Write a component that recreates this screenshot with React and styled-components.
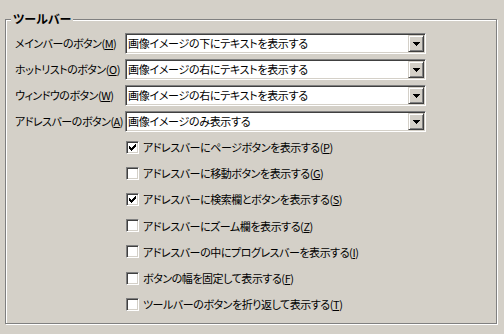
import React from "react";
import styled, { createGlobalStyle } from "styled-components";

const Global = createGlobalStyle`
  html, body { margin: 0; padding: 0; background: #d4d0c8; }
  body {
    width: 504px; height: 334px; overflow: hidden;
    font-family: "Noto Sans CJK JP", "Noto Sans", sans-serif;
    font-size: 11px; color: #000;
    font-feature-settings: "palt";
  }
`;

const Page = styled.div`
  padding: 19px 6px 0 5px;
`;

const Group = styled.div`
  position: relative;
  box-sizing: border-box;
  width: 492px;
  height: 305px;
  border: 1px solid #808080;
  box-shadow: 1px 1px 0 #fff, inset 1px 1px 0 #fff;
  padding: 13px 0 0 9px;
`;

const Legend = styled.div`
  position: absolute;
  left: 5px;
  top: -9px;
  padding: 0 2px;
  background: #d4d0c8;
  font-weight: bold;
  font-size: 12px;
  line-height: 16px;
`;

const Grid = styled.div`
  display: grid;
  grid-template-columns: 110px 301px;
  grid-auto-rows: 21px;
  row-gap: 5px;
  align-items: center;
`;

const Label = styled.div`
  white-space: nowrap;
  line-height: 21px;
  letter-spacing: -0.5px;
`;

const U = styled.span`
  text-decoration: underline;
  text-underline-offset: 1px;
`;

const Combo = styled.div`
  box-sizing: border-box;
  height: 21px;
  display: flex;
  background: #fff;
  border: 1px solid;
  border-color: #808080 #fff #fff #808080;
  box-shadow: inset 1px 1px 0 #404040, inset -1px -1px 0 #d4d0c8;
  padding: 1px;
`;

const ComboText = styled.div`
  flex: 1;
  padding-left: 1px;
  line-height: 17px;
  font-size: 11px;
  letter-spacing: -0.3px;
  white-space: nowrap;
  overflow: hidden;
`;

const DropButton = styled.div`
  box-sizing: border-box;
  width: 16px;
  height: 17px;
  background: #d4d0c8;
  border: 1px solid;
  border-color: #d4d0c8 #404040 #404040 #d4d0c8;
  box-shadow: inset 1px 1px 0 #fff, inset -1px -1px 0 #808080;
  display: flex;
  align-items: center;
  justify-content: center;
`;

const CheckList = styled.div`
  margin: 2px 0 0 111px;
  display: flex;
  flex-direction: column;
`;

const CheckRow = styled.div`
  height: 26.2px;
  display: flex;
  align-items: center;
  gap: 4px;
  white-space: nowrap;
`;

const Box = styled.div`
  box-sizing: border-box;
  width: 13px;
  height: 13px;
  flex: none;
  background: #fff;
  border: 1px solid;
  border-color: #808080 #fff #fff #808080;
  box-shadow: inset 1px 1px 0 #404040, inset -1px -1px 0 #d4d0c8;
  display: flex;
  align-items: center;
  justify-content: center;
`;

const CheckText = styled.span`
  line-height: 16px;
  letter-spacing: -0.45px;
`;

const Arrow = () => (
  <svg width="7" height="4" viewBox="0 0 7 4" shapeRendering="crispEdges">
    <path d="M0 0H7L3.5 4Z" fill="#000" />
  </svg>
);

const Tick = () => (
  <svg width="7" height="7" viewBox="0 0 7 7" shapeRendering="crispEdges">
    <path
      d="M0 2h1v1h1v1h1v-1h1v-1h1v-1h1v-1h1v3h-1v1h-1v1h-1v1h-1v1h-1v-1h-1v-1h-1z"
      fill="#000"
    />
  </svg>
);

const rows = [
  ["メインバーのボタン", "M", "画像イメージの下にテキストを表示する"],
  ["ホットリストのボタン", "O", "画像イメージの右にテキストを表示する"],
  ["ウィンドウのボタン", "W", "画像イメージの右にテキストを表示する"],
  ["アドレスバーのボタン", "A", "画像イメージのみ表示する"],
];

const checks = [
  ["アドレスバーにページボタンを表示する", "P", true],
  ["アドレスバーに移動ボタンを表示する", "G", false],
  ["アドレスバーに検索欄とボタンを表示する", "S", true],
  ["アドレスバーにズーム欄を表示する", "Z", false],
  ["アドレスバーの中にプログレスバーを表示する", "I", false],
  ["ボタンの幅を固定して表示する", "F", false],
  ["ツールバーのボタンを折り返して表示する", "T", false],
];

export default function App() {
  return (
    <Page>
      <Global />
      <Group>
        <Legend>ツールバー</Legend>
        <Grid>
          {rows.map(([label, key, value], i) => (
            <React.Fragment key={i}>
              <Label>
                {label}(<U>{key}</U>)
              </Label>
              <Combo>
                <ComboText>{value}</ComboText>
                <DropButton>
                  <Arrow />
                </DropButton>
              </Combo>
            </React.Fragment>
          ))}
        </Grid>
        <CheckList>
          {checks.map(([text, key, on], i) => (
            <CheckRow key={i}>
              <Box>{on && <Tick />}</Box>
              <CheckText>
                {text}(<U>{key}</U>)
              </CheckText>
            </CheckRow>
          ))}
        </CheckList>
      </Group>
    </Page>
  );
}
